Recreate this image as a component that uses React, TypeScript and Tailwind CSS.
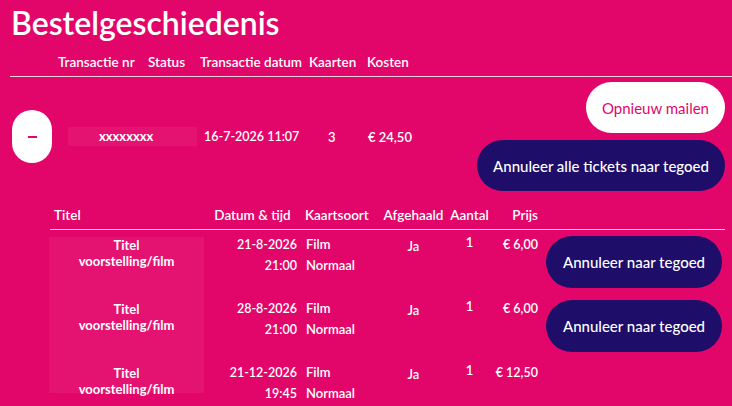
type Ticket = { date: string; time: string; type: string; sub: string; price: string; cancel: boolean; h: string };

const tickets: Ticket[] = [
  { date: "21-8-2026", time: "21:00", type: "Film", sub: "Normaal", price: "€ 6,00", cancel: true, h: "h-[64px]" },
  { date: "28-8-2026", time: "21:00", type: "Film", sub: "Normaal", price: "€ 6,00", cancel: true, h: "h-[64px]" },
  { date: "21-12-2026", time: "19:45", type: "Film", sub: "Normaal", price: "€ 12,50", cancel: false, h: "h-[28px]" },
];

export default function App() {
  return (
    <div className="w-[732px] h-[406px] overflow-hidden bg-[#e2066b] text-white [font-family:Lato,'Open_Sans',sans-serif]">
      <div className="pl-[11px] pt-[3px]">
        <h1 className="text-[32px] font-semibold leading-[40px]">Bestelgeschiedenis</h1>
      </div>

      <div className="ml-[10px] mt-[9px] h-[25px] border-b border-[#f3d2df] flex text-[13.5px] font-semibold leading-[20px] whitespace-nowrap">
        <div className="w-[48px]" />
        <div className="w-[90px]">Transactie nr</div>
        <div className="w-[52px]">Status</div>
        <div className="w-[109px]">Transactie datum</div>
        <div className="w-[58px]">Kaarten</div>
        <div>Kosten</div>
      </div>

      <div className="flex items-center pt-[5px] pl-[12px] pr-[7px]">
        <div className="w-[40px] h-[53px] rounded-full bg-white flex items-center justify-center">
          <span className="block w-[9px] h-[2px] bg-[#e2066b]" />
        </div>
        <div className="ml-[16px] w-[129px] h-[19px] bg-[#e41371] text-[13px] font-bold leading-[19px] pl-[31px]">xxxxxxxx</div>
        <div className="ml-[7px] w-[124px] text-[12.5px] font-semibold leading-[20px] whitespace-nowrap">16-7-2026 11:07</div>
        <div className="w-[40px] text-[13px] font-semibold leading-[20px]">3</div>
        <div className="text-[13px] font-semibold leading-[20px] whitespace-nowrap">€ 24,50</div>
        <div className="flex-1 flex flex-col items-end gap-[7px]">
          <button className="h-[51px] px-[16px] rounded-full bg-white text-[#e2066b] text-[15px] leading-[20px]">Opnieuw mailen</button>
          <button className="h-[51px] px-[16px] rounded-full bg-[#1e0e6a] text-white text-[15px] font-medium leading-[20px]">Annuleer alle tickets naar tegoed</button>
        </div>
      </div>

      <div className="ml-[49px] w-[676px] mt-[14px]">
        <div className="h-[25px] border-b border-[#f3d2df] flex text-[13.5px] font-semibold leading-[20px] ml-[1px] whitespace-nowrap">
          <div className="w-[154px] pl-[4px]">Titel</div>
          <div className="w-[97px] text-center">Datum &amp; tijd</div>
          <div className="w-[80px] pl-[4px]">Kaartsoort</div>
          <div className="w-[65px] text-center">Afgehaald</div>
          <div className="w-[47px] text-center">Aantal</div>
          <div className="w-[49px] text-right pr-[4px]">Prijs</div>
        </div>

        <div className="mt-[7px]">
          {tickets.map((t, i) => (
            <div key={i} className={`flex items-start whitespace-nowrap ${t.h}`}>
              <div className="w-[155px] h-full bg-[#e41371] text-center text-[13px] font-bold leading-[16px]">
                <div>Titel</div>
                <div>voorstelling/film</div>
              </div>
              <div className="w-[97px] pr-[4px] text-right text-[12.5px] font-semibold">
                <div className="leading-[15px]">{t.date}</div>
                <div className="leading-[15px] mt-[6px]">{t.time}</div>
              </div>
              <div className="w-[80px] pl-[5px] text-[13px] font-semibold">
                <div className="leading-[15px]">{t.type}</div>
                <div className="leading-[15px] mt-[6px]">{t.sub}</div>
              </div>
              <div className="w-[65px] text-center text-[13px] font-semibold leading-[15px] mt-[2px]">Ja</div>
              <div className="w-[47px] text-center text-[13px] font-semibold leading-[15px] -mt-[2px]">1</div>
              <div className="w-[49px] pr-[4px] text-right text-[12.5px] font-semibold leading-[15px]">{t.price}</div>
              {t.cancel && (
                <button className="ml-[4px] -mt-[1px] w-[176px] h-[52px] rounded-full bg-[#1e0e6a] text-white text-[15px] font-medium leading-[20px]">
                  Annuleer naar tegoed
                </button>
              )}
            </div>
          ))}
        </div>
      </div>
    </div>
  );
}
